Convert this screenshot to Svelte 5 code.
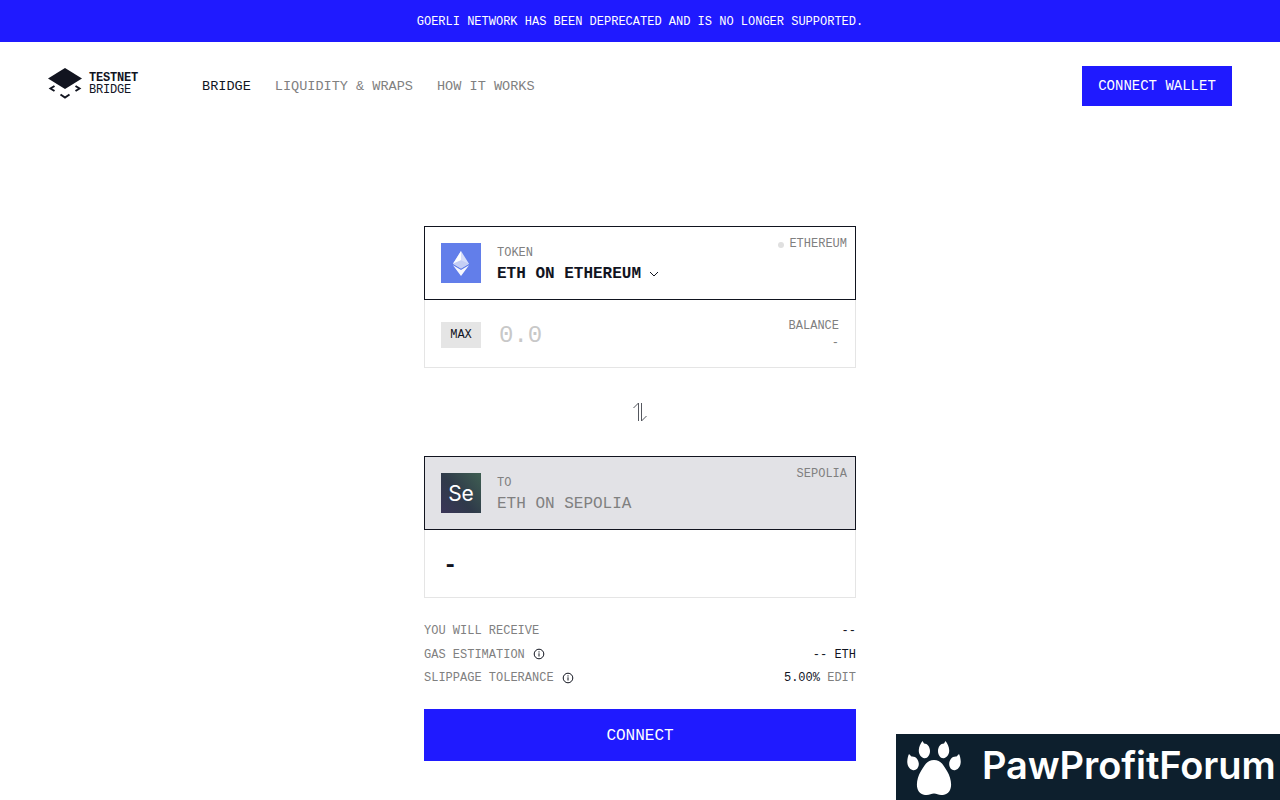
<script>
  const details = [
    { label: 'YOU WILL RECEIVE', info: false },
    { label: 'GAS ESTIMATION', info: true },
    { label: 'SLIPPAGE TOLERANCE', info: true }
  ];
</script>

<div class="page">
  <div class="banner">GOERLI NETWORK HAS BEEN DEPRECATED AND IS NO LONGER SUPPORTED.</div>

  <header class="nav">
    <div class="left">
      <div class="logo">
        <svg width="34" height="36" viewBox="0 0 34 36" aria-hidden="true">
          <path d="M17 0 34 10.5 17 21 0 10.5Z" fill="#11141f" />
          <path d="M6.500 18 2.500 20.500 6.500 23M27.500 18l4 2.500-4 2.500M12.500 26.500 17 29.500l4.500-3" fill="none" stroke="#11141f" stroke-width="2" />
        </svg>
        <div class="wordmark"><b>TESTNET</b><span>BRIDGE</span></div>
      </div>
      <nav class="links">
        <span class="active">BRIDGE</span>
        <span>LIQUIDITY &amp; WRAPS</span>
        <span>HOW IT WORKS</span>
      </nav>
    </div>
    <button class="wallet">CONNECT WALLET</button>
  </header>

  <main class="form">
    <section class="card">
      <div class="chain"><i class="dot"></i>ETHEREUM</div>
      <div class="tile eth">
        <svg width="16" height="25" viewBox="0 0 18 28" aria-hidden="true">
          <path d="M9 0 0 14.300 9 19.500 18 14.300Z" fill="#fff" fill-opacity=".75" />
          <path d="M9 0V10.300L0 14.300Z" fill="#fff" fill-opacity=".95" />
          <path d="M9 10.300 0 14.300 9 19.500 18 14.300Z" fill="#c5cff5" />
          <path d="M0 16.100 9 28 18 16.100 9 21.300Z" fill="#fff" fill-opacity=".95" />
        </svg>
      </div>
      <div class="meta">
        <div class="caption">TOKEN</div>
        <div class="token"><span>ETH ON ETHEREUM</span><svg class="chev" width="10" height="6" viewBox="0 0 10 6" aria-hidden="true"><path d="M1 1l4 4 4-4" fill="none" stroke="#11141f" /></svg></div>
      </div>
    </section>
    <section class="amount">
      <span class="max">MAX</span>
      <span class="zero">0.0</span>
      <div class="balance"><span>BALANCE</span><span>-</span></div>
    </section>

    <div class="swap">
      <svg width="16" height="20" viewBox="0 0 16 20" aria-hidden="true">
        <path d="M6.500 19V1L1.500 6M9.500 1V19L14.500 14" fill="none" stroke="#55585f" stroke-width="1" />
      </svg>
    </div>

    <section class="card muted">
      <div class="chain">SEPOLIA</div>
      <div class="tile sepolia">Se</div>
      <div class="meta">
        <div class="caption">TO</div>
        <div class="token grey">ETH ON SEPOLIA</div>
      </div>
    </section>
    <section class="amount out"><span class="dash">-</span></section>

    <div class="details">
      {#each details as row, i}
        <div class="row">
          <div class="label">
            {row.label}
            {#if row.info}
              <svg width="12" height="12" viewBox="0 0 12 12" aria-hidden="true">
                <circle cx="6" cy="6" r="4.800" fill="none" stroke="#11141f" />
                <path d="M6 5.300V8.500M6 3.300V4.500" stroke="#11141f" />
              </svg>
            {/if}
          </div>
          {#if i === 0}
            <div class="value">--</div>
          {:else if i === 1}
            <div class="value">-- ETH</div>
          {:else}
            <div class="value slip">5.00% <span>EDIT</span></div>
          {/if}
        </div>
      {/each}
    </div>

    <button class="connect">CONNECT</button>
  </main>

  <aside class="badge">
    <svg width="54" height="56" viewBox="0 -2 54 56" aria-hidden="true">
      <path d="M2 13 4.500 15.500C9 15 12 19 11.800 23.500 11.500 27.500 8.500 30 5.500 29 2 28 0 24 .300 20 .500 17 1 15 2 13Z" fill="#fff" />
      <path d="M15.500 0 17 2.500C20.500 2.500 23 6 23 10 23 14 20.500 17.500 17.500 17.200 14 16.800 11.500 13 11.800 9 12 5.500 13.500 2.500 15.500 0Z" fill="#fff" />
      <path d="M38.500 0 37 2.500C33.500 2.500 31 6 31 10 31 14 33.500 17.500 36.500 17.200 40 16.800 42.500 13 42.200 9 42 5.500 40.500 2.500 38.500 0Z" fill="#fff" />
      <path d="M52 13 49.500 15.500C45 15 42 19 42.200 23.500 42.500 27.500 45.500 30 48.500 29 52 28 54 24 53.700 20 53.500 17 53 15 52 13Z" fill="#fff" />
      <path d="M27 19C21 19 18 23 14 30 8 40 8 53 18 54 22 54.300 24 52.500 27 52.500S32 54.300 36 54C46 53 46 40 40 30 36 23 33 19 27 19Z" fill="#fff" />
    </svg>
    <span>PawProfitForum</span>
  </aside>
</div>

<style>
  :global(body) {
    margin: 0;
    background: #fff;
  }
  .page {
    position: relative;
    height: 800px;
    overflow: hidden;
    font-family: "Liberation Mono", "DejaVu Sans Mono", monospace;
    color: #11141f;
  }
  .banner {
    box-sizing: border-box;
    height: 42px;
    padding-top: 2px;
    background: #1f1aff;
    color: #fff;
    font-size: 12px;
    display: flex;
    align-items: center;
    justify-content: center;
  }
  .nav {
    display: flex;
    align-items: center;
    justify-content: space-between;
    padding: 24px 48px;
  }
  .left {
    display: flex;
    align-items: center;
  }
  .logo {
    display: flex;
    align-items: center;
    gap: 7px;
    width: 154px;
  }
  .wordmark {
    display: flex;
    flex-direction: column;
    font-size: 12px;
    letter-spacing: -0.200px;
    line-height: 12px;
    margin-top: -4px;
  }
  .links {
    display: flex;
    gap: 24px;
    font-size: 13.550px;
    color: #808080;
  }
  .active {
    color: #11141f;
  }
  .wallet {
    width: 150px;
    height: 40px;
    border: 0;
    padding: 0;
    background: #1f1aff;
    color: #fff;
    font: inherit;
    font-size: 14px;
  }
  .form {
    width: 432px;
    margin: 96px auto 0;
  }
  .card {
    position: relative;
    box-sizing: border-box;
    height: 74px;
    border: 1px solid #11141f;
    padding: 16px;
    display: flex;
    gap: 16px;
  }
  .muted {
    background: #e2e2e6;
  }
  .chain {
    position: absolute;
    top: 11px;
    right: 8px;
    display: flex;
    align-items: center;
    gap: 5px;
    font-size: 12px;
    line-height: 13px;
    color: #808080;
  }
  .dot {
    width: 6px;
    height: 6px;
    border-radius: 50%;
    background: #e0e0e0;
  }
  .tile {
    width: 40px;
    height: 40px;
    flex: none;
    display: flex;
    align-items: center;
    justify-content: center;
  }
  .eth {
    background: #627eea;
  }
  .sepolia {
    background: linear-gradient(50deg, #3a3558 0%, #2f3a4a 45%, #3f5f52 100%);
    color: #fff;
    font-family: Inter, "Liberation Sans", sans-serif;
    font-size: 21px;
  }
  .meta {
    padding-top: 3px;
  }
  .caption {
    font-size: 12px;
    line-height: 15px;
    color: #808080;
  }
  .token {
    margin-top: 3px;
    font-size: 16px;
    line-height: 20px;
    font-weight: 700;
    white-space: nowrap;
    display: flex;
    align-items: center;
  }
  .grey {
    font-weight: 400;
    color: #808080;
  }
  .chev {
    margin-left: 8px;
    width: 10px;
  }
  .amount {
    box-sizing: border-box;
    height: 68px;
    border: 1px solid #e5e5e5;
    border-top: 0;
    padding: 1px 16px 0;
    display: flex;
    align-items: center;
  }
  .max {
    width: 40px;
    height: 26px;
    margin-top: 2px;
    background: #e5e5e5;
    font-size: 12px;
    display: flex;
    align-items: center;
    justify-content: center;
  }
  .zero {
    margin-left: 18px;
    padding-top: 3px;
    font-size: 24px;
    color: #c8c8c8;
  }
  .balance {
    margin-left: auto;
    display: flex;
    flex-direction: column;
    align-items: flex-end;
    gap: 3px;
    font-size: 12px;
    line-height: 14px;
    color: #808080;
  }
  .dash {
    margin-left: 2px;
    padding-top: 3px;
    font-size: 24px;
    font-weight: 700;
  }
  .swap {
    height: 88px;
    display: flex;
    align-items: center;
    justify-content: center;
  }
  .details {
    margin-top: 25px;
    display: flex;
    flex-direction: column;
    gap: 7.500px;
    font-size: 12px;
    line-height: 16px;
  }
  .row {
    display: flex;
    justify-content: space-between;
  }
  .label {
    display: flex;
    align-items: center;
    gap: 8px;
    color: #808080;
  }
  .label svg {
    margin-top: -1px;
  }
  .slip span {
    color: #808080;
  }
  .connect {
    display: block;
    width: 100%;
    height: 52px;
    margin-top: 23px;
    border: 0;
    padding: 2px 0 0;
    background: #1f1aff;
    color: #fff;
    font: inherit;
    font-size: 16px;
  }
  .badge {
    position: absolute;
    right: 0;
    bottom: 0;
    width: 384px;
    height: 66px;
    background: #0d1f2d;
    display: flex;
    align-items: center;
    gap: 21px;
    padding-left: 11px;
    box-sizing: border-box;
    color: #fff;
    font-family: Inter, Lato, sans-serif;
    font-weight: 600;
    font-size: 38px;
    letter-spacing: -0.100px;
    white-space: nowrap;
  }
  .badge span {
    margin-top: -4px;
  }
</style>
